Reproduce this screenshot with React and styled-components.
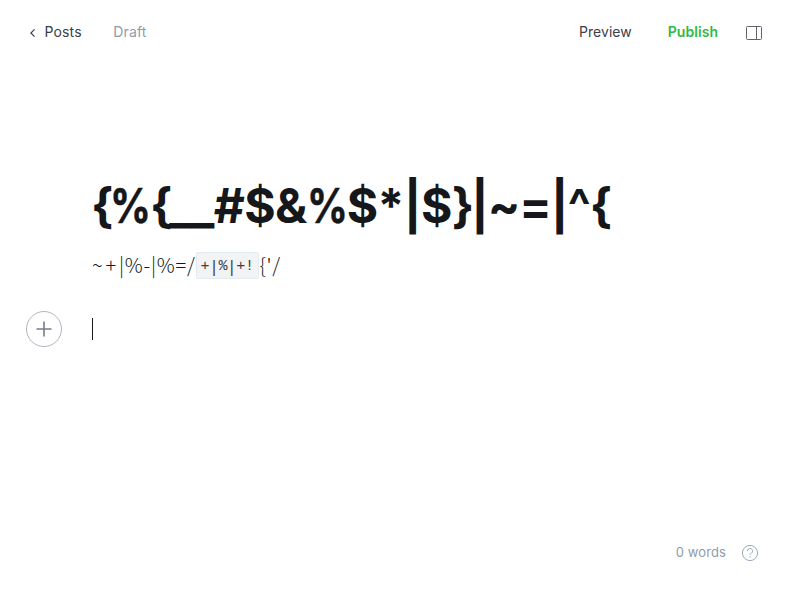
import React from "react";
import styled, { createGlobalStyle } from "styled-components";

const Global = createGlobalStyle`
  * { box-sizing: border-box; }
  body { margin: 0; background: #fff; }
`;
const Page = styled.div`
  width: 800px; height: 600px; display: flex; flex-direction: column;
  font-family: Inter, sans-serif; background: #fff; overflow: hidden;
`;
const Header = styled.header`
  display: flex; justify-content: space-between; align-items: center;
  height: 66px; padding: 0 38px 1px 28px;
`;
const Group = styled.div`
  display: flex; align-items: center;
`;
const Back = styled.a`
  display: flex; align-items: center; gap: 7.5px; margin-right: 31.5px;
`;
const Label = styled.span`
  font-size: ${(p) => p.$size || 14}px; line-height: 18px; letter-spacing: ${(p) => p.$track ?? 0.15}px;
  color: ${(p) => p.$color}; font-weight: ${(p) => p.$weight || 400};
  margin-right: ${(p) => p.$gap || 0}px; padding-bottom: ${(p) => p.$lift ?? 1}px;
`;
const Main = styled.main`
  flex: 1; padding: 110px 92px 0;
`;
const Title = styled.h1`
  margin: 0 0 0 -1px; font-size: 48px; line-height: 60px; font-weight: 700; color: #15171a;
  letter-spacing: -0.6px; white-space: nowrap;
`;
const Brace = styled.span`
  letter-spacing: -3.4px;
`;
const Tight = styled.span`
  letter-spacing: -1.1px;
`;
const Percent = styled.span`
  display: inline-block; transform: scaleX(0.84); transform-origin: left; margin-right: -8.2px;
  -webkit-text-stroke: 0.5px #15171a;
`;
const Paragraph = styled.p`
  display: flex; align-items: center; height: 32px; margin: 13px 0 0;
  font-family: "Noto Sans CJK SC", sans-serif; font-weight: 300; font-size: 20px; line-height: 32px;
  letter-spacing: 0.75px; color: #15171a; white-space: nowrap;
`;
const Wide = styled.span`
  letter-spacing: 2.8px;
`;
const Code = styled.code`
  display: flex; align-items: center; height: 27px; width: 63px; margin-right: 1px; padding: 3px 0 0 4px;
  font-family: "Liberation Mono", monospace; font-size: 15px; line-height: 20px; letter-spacing: -0.1px; font-weight: 400;
  border: 1px solid #e5eaef; border-radius: 2px; background: #f1f3f5; color: #394047;
`;
const Bar = styled.span`
  font-family: "DejaVu Sans Mono", monospace;
`;
const EmptyLine = styled.div`
  display: flex; align-items: center; gap: 30px; margin: 30px 0 0 -66px;
`;
const Plus = styled.button`
  display: flex; align-items: center; justify-content: center; width: 36px; height: 36px;
  border: 1px solid #aeb7c1; border-radius: 50%; background: #fff; padding: 0;
`;
const Caret = styled.span`
  width: 1px; height: 22px; background: #15171a;
`;
const Footer = styled.footer`
  display: flex; justify-content: flex-end; align-items: center; height: 94px; padding: 0 41px 0 0;
`;

export default function App() {
  return (
    <Page>
      <Global />
      <Header>
        <Group>
          <Back>
            <svg width="9" height="9" viewBox="0 0 9 9" fill="none" stroke="#394047" strokeWidth="1.2"><path d="M6.5 1.4 2.9 5l3.6 3.6" /></svg>
            <Label $color="#394047">Posts</Label>
          </Back>
          <Label $color="#8e9cac">Draft</Label>
        </Group>
        <Group>
          <Label $color="#394047" $gap={36} $track={0.02}>Preview</Label>
          <Label $color="#30b943" $weight={600} $gap={28} $track={0.05}>Publish</Label>
          <svg width="16" height="16" viewBox="0 0 16 16" fill="none" stroke="#5d646b"><rect x=".5" y="1.5" width="15" height="13" rx="1" /><path d="M10.5 1.5v13" /></svg>
        </Group>
      </Header>
      <Main>
        <Title>
          <Brace>{"{"}</Brace><Percent>%</Percent><Brace>{"{"}</Brace>__#$&<Percent>%</Percent>$*|$<Brace>{"}"}</Brace><Tight>|~=|^</Tight><Brace>{"{"}</Brace>
        </Title>
        <Paragraph><Wide>~+</Wide>|%-|%=/<Code>+<Bar>|</Bar>%<Bar>|</Bar>+!</Code>{"{'/"}</Paragraph>
        <EmptyLine>
          <Plus aria-label="Add a card">
            <svg width="16" height="16" viewBox="0 0 16 16" stroke="#747e89" strokeWidth="1.6"><path d="M8 .5v15M.5 8h15" /></svg>
          </Plus>
          <Caret />
        </EmptyLine>
      </Main>
      <Footer>
        <Label $color="#8e9cac" $gap={15} $size={13} $lift={2} $track={0.1}>0 words</Label>
        <svg width="18" height="18" viewBox="0 0 18 18" fill="none" stroke="#9daab9"><circle cx="9" cy="9" r="7.6" /><path d="M6.4 7.2a2.6 2.6 0 1 1 3.9 2.1c-.9.5-1.3.8-1.3 1.7M9 12.2v1.2" /></svg>
      </Footer>
    </Page>
  );
}
